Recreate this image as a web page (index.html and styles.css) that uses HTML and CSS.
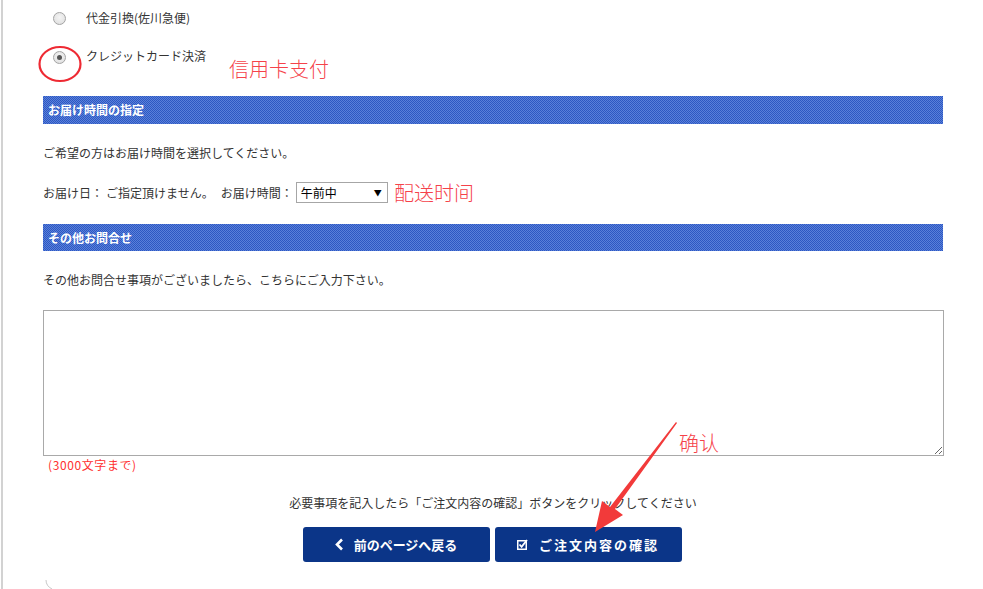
FILE: index.html
```html
<!DOCTYPE html>
<html lang="ja">
<head>
<meta charset="utf-8">
<title>ご注文手続き</title>
<link rel="stylesheet" href="styles.css">
</head>
<body>
<div class="page">
  <div class="content">
    <ul class="pay-list">
      <li class="pay-item"><span class="radio"></span><span class="pay-label">代金引換(佐川急便)</span></li>
      <li class="pay-item pay-item-checked"><span class="radio radio-on"></span><span class="pay-label">クレジットカード決済</span></li>
    </ul>

    <h2 class="bar bar-first">お届け時間の指定</h2>
    <p class="txt">ご希望の方はお届け時間を選択してください。</p>
    <div class="time-row">
      <span>お届け日：</span>
      <span class="time-gap">ご指定頂けません。</span>
      <span class="time-label">お届け時間：</span>
      <span class="select"><span class="select-val">午前中</span><span class="select-arrow">▼</span></span>
    </div>

    <h2 class="bar bar-second">その他お問合せ</h2>
    <p class="txt">その他お問合せ事項がございましたら、こちらにご入力下さい。</p>
    <textarea class="memo"></textarea>
    <p class="limit">(3000文字まで)</p>

    <p class="notice">必要事項を記入したら「ご注文内容の確認」ボタンをクリックしてください</p>
    <div class="btns">
      <a class="btn btn-back">
        <svg class="ico-chev" width="9" height="13" viewBox="0 0 9 13"><polyline points="7,1.5 2,6.5 7,11.5" fill="none" stroke="#fff" stroke-width="2.6"/></svg>
        <span>前のページへ戻る</span>
      </a>
      <a class="btn btn-confirm">
        <svg class="ico-check" width="11" height="11" viewBox="0 0 11 11"><rect x="0.75" y="1.75" width="8.5" height="8.5" fill="none" stroke="#fff" stroke-width="1.5"/><polyline points="2.5,5.5 4.6,7.8 10,1" fill="none" stroke="#fff" stroke-width="1.8"/></svg>
        <span class="btn-confirm-text">ご注文内容の確認</span>
      </a>
    </div>
  </div>

  <svg class="mark-circle" width="46" height="40" viewBox="0 0 46 40"><ellipse cx="23" cy="20" rx="20.5" ry="17" fill="none" stroke="#ee2a33" stroke-width="2.2"/></svg>
  <span class="note note-card">信用卡支付</span>
  <span class="note note-time">配送时间</span>
  <span class="note note-ok">确认</span>
  <svg class="mark-arrow" width="90" height="110" viewBox="0 0 90 110"><polygon points="82,0 83,1 21,87 29,93 1,110 8,79 16,85" fill="#f23a3a"/></svg>
  <svg class="mark-arc" width="10" height="10" viewBox="0 0 10 10"><path d="M1 0 Q1 6 7 9" fill="none" stroke="#c8c8c8" stroke-width="1"/></svg>
</div>
</body>
</html>
```

FILE: styles.css
```css
html, body {
  margin: 0;
  padding: 0;
  background: #fff;
}
body {
  font-family: "Noto Sans CJK JP", "Noto Sans", sans-serif;
  font-size: 12px;
  color: #333;
}
.page {
  position: relative;
  margin-left: 1px;
  border-left: 2px solid #d2d2d2;
  min-height: 589px;
  padding-left: 40px;
  box-sizing: border-box;
}
.content {
  width: 900px;
}
.pay-list {
  list-style: none;
  margin: 0;
  padding: 9px 0 0 10px;
}
.pay-item {
  display: flex;
  align-items: center;
  height: 18px;
  line-height: 18px;
}
.pay-item + .pay-item {
  margin-top: 20px;
}
.pay-item-checked .radio {
  margin-top: 3px;
}
.radio {
  width: 11px;
  height: 11px;
  border: 1px solid #a3a3a3;
  border-radius: 50%;
  background: radial-gradient(circle at 50% 40%, #f4f4f4 0, #dcdcdc 100%);
  margin-right: 20px;
  position: relative;
  flex: none;
}
.radio-on::after {
  content: "";
  position: absolute;
  left: 3px;
  top: 3px;
  width: 5px;
  height: 5px;
  border-radius: 50%;
  background: #555;
}
.bar {
  margin: 31px 0 0;
  height: 28px;
  line-height: 28px;
  padding-left: 5px;
  font-size: 12px;
  font-weight: bold;
  color: #fff;
  background: repeating-conic-gradient(#2d58c2 0 25%, #5a80da 0 50%) 0 0 / 2px 2px;
}
.bar-second {
  margin-top: 21px;
  height: 27px;
  line-height: 27px;
}
.txt {
  margin: 20px 0 0;
  height: 18px;
  line-height: 18px;
}
.time-row {
  margin-top: 20px;
  display: flex;
  align-items: center;
  height: 21px;
}
.time-gap {
  margin-left: 3px;
}
.time-label {
  margin-left: 7px;
}
.select {
  display: flex;
  align-items: center;
  justify-content: space-between;
  box-sizing: border-box;
  width: 92px;
  height: 21px;
  border: 1px solid #a6a6a6;
  padding: 0 5px 0 4px;
  color: #000;
  margin-left: 3px;
}
.select-arrow {
  font-size: 8px;
}
.memo {
  display: block;
  box-sizing: border-box;
  margin: 21px 0 0;
  width: 901px;
  height: 146px;
  border: 1px solid #a9a9a9;
  resize: both;
  font-family: inherit;
}
.limit {
  margin: 1px 0 0 5px;
  height: 16px;
  line-height: 16px;
  color: #ff3030;
  font-size: 12px;
  letter-spacing: 0.6px;
}
.notice {
  margin: 21px 0 0;
  text-align: center;
  height: 18px;
  line-height: 18px;
  color: #333;
  font-size: 12px;
}
.btns {
  margin-top: 15px;
  display: flex;
  justify-content: center;
  gap: 5px;
  padding-right: 2px;
}
.btn {
  display: flex;
  align-items: center;
  justify-content: center;
  gap: 10px;
  width: 187px;
  height: 35px;
  border-radius: 3px;
  background: #0b3588;
  color: #fff;
  font-weight: bold;
  font-size: 13px;
  text-decoration: none;
}
.btn-confirm {
  gap: 11px;
}
.btn-confirm-text {
  letter-spacing: 2px;
}
.ico-chev, .ico-check {
  flex: none;
}
.mark-circle {
  position: absolute;
  left: 34px;
  top: 44px;
}
.note {
  position: absolute;
  font-family: "Noto Sans CJK SC", sans-serif;
  font-size: 20px;
  line-height: 24px;
  color: #f5424a;
  font-weight: 300;
}
.note-card {
  left: 226px;
  top: 57px;
}
.note-time {
  left: 391px;
  top: 181px;
}
.note-ok {
  left: 676px;
  top: 431px;
}
.mark-arrow {
  position: absolute;
  left: 591px;
  top: 422px;
}
.mark-arc {
  position: absolute;
  left: 42px;
  top: 580px;
}
```
